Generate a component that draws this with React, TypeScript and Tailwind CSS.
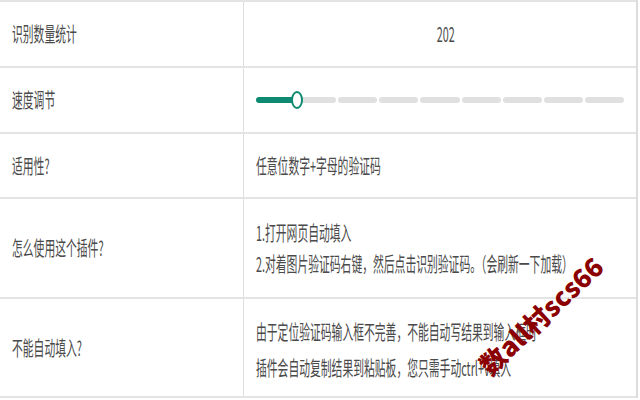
import React from "react";

const font = { fontFamily: '"Noto Sans CJK SC", "Liberation Sans", sans-serif' };

function Squish({ children, center }: { children: React.ReactNode; center?: boolean }) {
  return (
    <span
      className={
        "inline-block whitespace-nowrap scale-x-[0.54] " +
        (center ? "origin-center" : "origin-left")
      }
    >
      {children}
    </span>
  );
}

function Slider() {
  const segs = [0, 1, 2, 3, 4, 5, 6, 7, 8];
  return (
    <div className="relative w-[368px] h-[20px] flex items-center">
      <div className="flex w-full gap-[2px]">
        {segs.map((s) => (
          <div
            key={s}
            className={
              "flex-1 h-[6px] rounded-full " + (s === 0 ? "bg-[#0f8a72]" : "bg-[#e0e0e0]")
            }
          />
        ))}
      </div>
      <div className="absolute left-[35px] top-[1px] w-[12px] h-[18px] rounded-[50%] bg-white border-2 border-[#0f8a72]" />
    </div>
  );
}

export default function App() {
  const rows: { label: string; h: string; body: React.ReactNode }[] = [
    {
      label: "识别数量统计",
      h: "h-[66px]",
      body: (
        <div className="w-full text-center text-[20px]">
          <Squish center>202</Squish>
        </div>
      ),
    },
    { label: "速度调节", h: "h-[66px]", body: <Slider /> },
    {
      label: "适用性?",
      h: "h-[65px]",
      body: (
        <div className="text-[20px]">
          <Squish>任意位数字+字母的验证码</Squish>
        </div>
      ),
    },
    {
      label: "怎么使用这个插件?",
      h: "h-[100px]",
      body: (
        <div className="text-[20px] leading-[31px]">
          <div>
            <Squish>1.打开网页自动填入</Squish>
          </div>
          <div>
            <Squish>2.对着图片验证码右键，然后点击识别验证码。（会刷新一下加载）</Squish>
          </div>
        </div>
      ),
    },
    {
      label: "不能自动填入?",
      h: "h-[99px]",
      body: (
        <div className="text-[20px] leading-[36px] pt-[4px]">
          <div>
            <Squish>由于定位验证码输入框不完善，不能自动写结果到输入框时</Squish>
          </div>
          <div>
            <Squish>插件会自动复制结果到粘贴板，您只需手动ctrl+v填入</Squish>
          </div>
        </div>
      ),
    },
  ];

  return (
    <div className="relative w-[640px] h-[400px] bg-white overflow-hidden text-[#4a4a4a]" style={font}>
      <div className="w-[638px] border-r-2 border-[#dcdcdc]">
        {rows.map((r) => (
          <div
            key={r.label}
            className={"grid grid-cols-[244px_1fr] border-t-2 border-[#e4e4e4] " + r.h}
          >
            <div className="flex items-center pl-[12px] border-r border-[#dedede] text-[20px]">
              <Squish>{r.label}</Squish>
            </div>
            <div className="flex items-center pl-[12px]">{r.body}</div>
          </div>
        ))}
        <div className="border-t-2 border-[#e4e4e4]" />
      </div>
      <div
        className="absolute left-[462px] top-[302px] -rotate-[43deg] text-[26px] font-black text-[#8b0000] whitespace-nowrap leading-none"
        style={font}
      >
        数all村scs66
      </div>
    </div>
  );
}
